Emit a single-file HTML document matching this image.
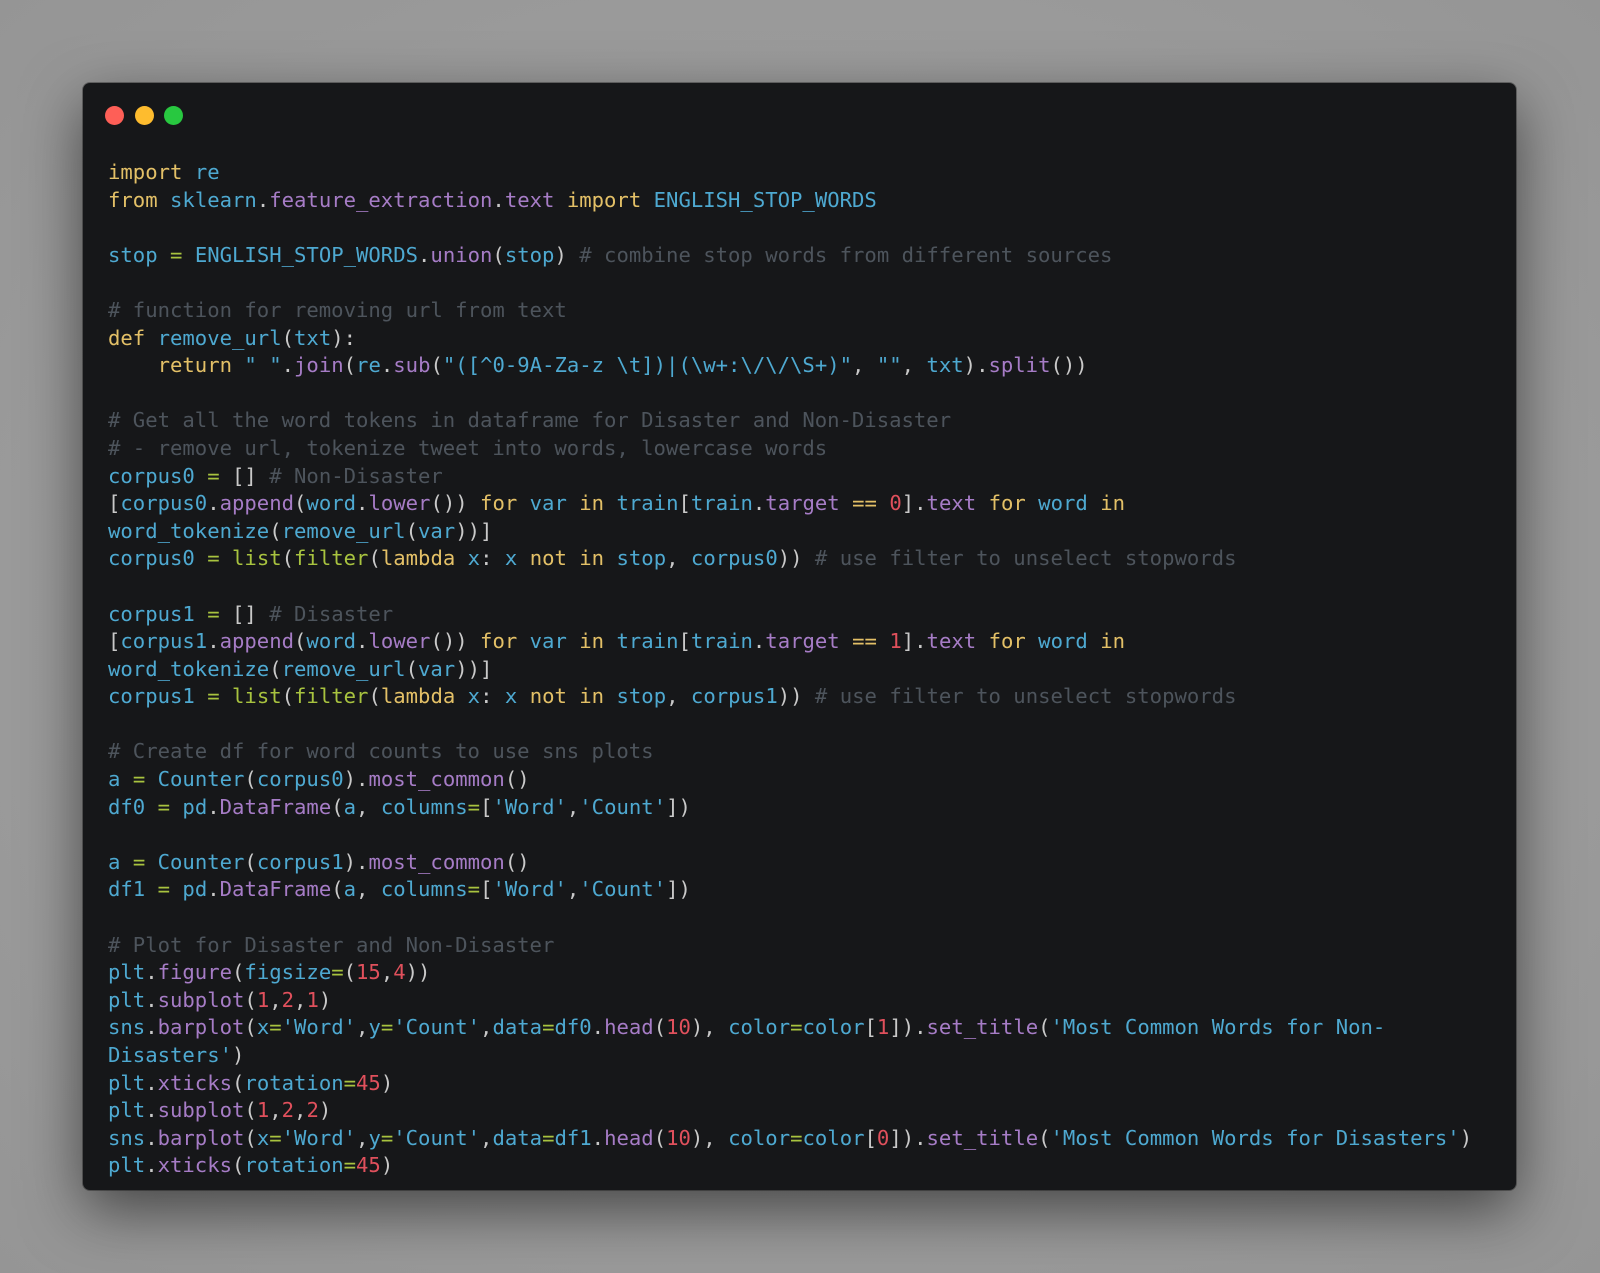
<!DOCTYPE html>
<html><head><meta charset="utf-8"><style>
html,body{margin:0;padding:0}
body{width:1600px;height:1273px;background:radial-gradient(ellipse at 50% 50%,#a3a3a3 0%,#9a9a9a 70%,#959595 100%);position:relative;overflow:hidden}
.win{position:absolute;left:83px;top:83px;width:1433px;height:1107px;background:#161719;border-radius:7px;box-shadow:0 20px 60px rgba(0,0,0,.55),0 0 0 1px rgba(0,0,0,.3)}
.dot{position:absolute;top:106px;width:19px;height:19px;border-radius:50%}
pre{position:absolute;left:108px;top:159px;margin:0;font-family:"DejaVu Sans Mono","Liberation Mono",monospace;font-size:20.6px;line-height:27.6px;color:#c9c9c9;white-space:pre}
.k{color:#e3c067}.v{color:#4ea9d1}.m{color:#a67cc6}.g{color:#a8c33f}.n{color:#e0505c}.c{color:#4d545c}.p{color:#c9c9c9}.s{color:#4ea9d1}
</style></head><body>
<div class="win"></div>
<div class="dot" style="left:105px;background:#fe5f57"></div>
<div class="dot" style="left:135px;background:#febc2e"></div>
<div class="dot" style="left:164px;background:#28c840"></div>
<pre><span class="k">import</span> <span class="v">re</span>
<span class="k">from</span> <span class="v">sklearn</span>.<span class="m">feature_extraction</span>.<span class="m">text</span> <span class="k">import</span> <span class="v">ENGLISH_STOP_WORDS</span>

<span class="v">stop</span> <span class="g">=</span> <span class="v">ENGLISH_STOP_WORDS</span>.<span class="m">union</span>(<span class="v">stop</span>) <span class="c"># combine stop words from different sources</span>

<span class="c"># function for removing url from text</span>
<span class="k">def</span> <span class="v">remove_url</span>(<span class="v">txt</span>):
    <span class="k">return</span> <span class="s">" "</span>.<span class="m">join</span>(<span class="v">re</span>.<span class="m">sub</span>(<span class="s">"([^0-9A-Za-z \t])|(\w+:\/\/\S+)"</span>, <span class="s">""</span>, <span class="v">txt</span>).<span class="m">split</span>())

<span class="c"># Get all the word tokens in dataframe for Disaster and Non-Disaster</span>
<span class="c"># - remove url, tokenize tweet into words, lowercase words</span>
<span class="v">corpus0</span> <span class="g">=</span> [] <span class="c"># Non-Disaster</span>
[<span class="v">corpus0</span>.<span class="m">append</span>(<span class="v">word</span>.<span class="m">lower</span>()) <span class="k">for</span> <span class="v">var</span> <span class="k">in</span> <span class="v">train</span>[<span class="v">train</span>.<span class="m">target</span> <span class="k">==</span> <span class="n">0</span>].<span class="m">text</span> <span class="k">for</span> <span class="v">word</span> <span class="k">in</span>
<span class="v">word_tokenize</span>(<span class="v">remove_url</span>(<span class="v">var</span>))]
<span class="v">corpus0</span> <span class="g">=</span> <span class="g">list</span>(<span class="g">filter</span>(<span class="k">lambda</span> <span class="v">x</span>: <span class="v">x</span> <span class="k">not in</span> <span class="v">stop</span>, <span class="v">corpus0</span>)) <span class="c"># use filter to unselect stopwords</span>

<span class="v">corpus1</span> <span class="g">=</span> [] <span class="c"># Disaster</span>
[<span class="v">corpus1</span>.<span class="m">append</span>(<span class="v">word</span>.<span class="m">lower</span>()) <span class="k">for</span> <span class="v">var</span> <span class="k">in</span> <span class="v">train</span>[<span class="v">train</span>.<span class="m">target</span> <span class="k">==</span> <span class="n">1</span>].<span class="m">text</span> <span class="k">for</span> <span class="v">word</span> <span class="k">in</span>
<span class="v">word_tokenize</span>(<span class="v">remove_url</span>(<span class="v">var</span>))]
<span class="v">corpus1</span> <span class="g">=</span> <span class="g">list</span>(<span class="g">filter</span>(<span class="k">lambda</span> <span class="v">x</span>: <span class="v">x</span> <span class="k">not in</span> <span class="v">stop</span>, <span class="v">corpus1</span>)) <span class="c"># use filter to unselect stopwords</span>

<span class="c"># Create df for word counts to use sns plots</span>
<span class="v">a</span> <span class="g">=</span> <span class="v">Counter</span>(<span class="v">corpus0</span>).<span class="m">most_common</span>()
<span class="v">df0</span> <span class="g">=</span> <span class="v">pd</span>.<span class="m">DataFrame</span>(<span class="v">a</span>, <span class="v">columns</span><span class="g">=</span>[<span class="s">'Word'</span>,<span class="s">'Count'</span>])

<span class="v">a</span> <span class="g">=</span> <span class="v">Counter</span>(<span class="v">corpus1</span>).<span class="m">most_common</span>()
<span class="v">df1</span> <span class="g">=</span> <span class="v">pd</span>.<span class="m">DataFrame</span>(<span class="v">a</span>, <span class="v">columns</span><span class="g">=</span>[<span class="s">'Word'</span>,<span class="s">'Count'</span>])

<span class="c"># Plot for Disaster and Non-Disaster</span>
<span class="v">plt</span>.<span class="m">figure</span>(<span class="v">figsize</span><span class="g">=</span>(<span class="n">15</span>,<span class="n">4</span>))
<span class="v">plt</span>.<span class="m">subplot</span>(<span class="n">1</span>,<span class="n">2</span>,<span class="n">1</span>)
<span class="v">sns</span>.<span class="m">barplot</span>(<span class="v">x</span><span class="g">=</span><span class="s">'Word'</span>,<span class="v">y</span><span class="g">=</span><span class="s">'Count'</span>,<span class="v">data</span><span class="g">=</span><span class="v">df0</span>.<span class="m">head</span>(<span class="n">10</span>), <span class="v">color</span><span class="g">=</span><span class="v">color</span>[<span class="n">1</span>]).<span class="m">set_title</span>(<span class="s">'Most Common Words for Non-</span>
<span class="s">Disasters'</span>)
<span class="v">plt</span>.<span class="m">xticks</span>(<span class="v">rotation</span><span class="g">=</span><span class="n">45</span>)
<span class="v">plt</span>.<span class="m">subplot</span>(<span class="n">1</span>,<span class="n">2</span>,<span class="n">2</span>)
<span class="v">sns</span>.<span class="m">barplot</span>(<span class="v">x</span><span class="g">=</span><span class="s">'Word'</span>,<span class="v">y</span><span class="g">=</span><span class="s">'Count'</span>,<span class="v">data</span><span class="g">=</span><span class="v">df1</span>.<span class="m">head</span>(<span class="n">10</span>), <span class="v">color</span><span class="g">=</span><span class="v">color</span>[<span class="n">0</span>]).<span class="m">set_title</span>(<span class="s">'Most Common Words for Disasters'</span>)
<span class="v">plt</span>.<span class="m">xticks</span>(<span class="v">rotation</span><span class="g">=</span><span class="n">45</span>)</pre>
</body></html>
